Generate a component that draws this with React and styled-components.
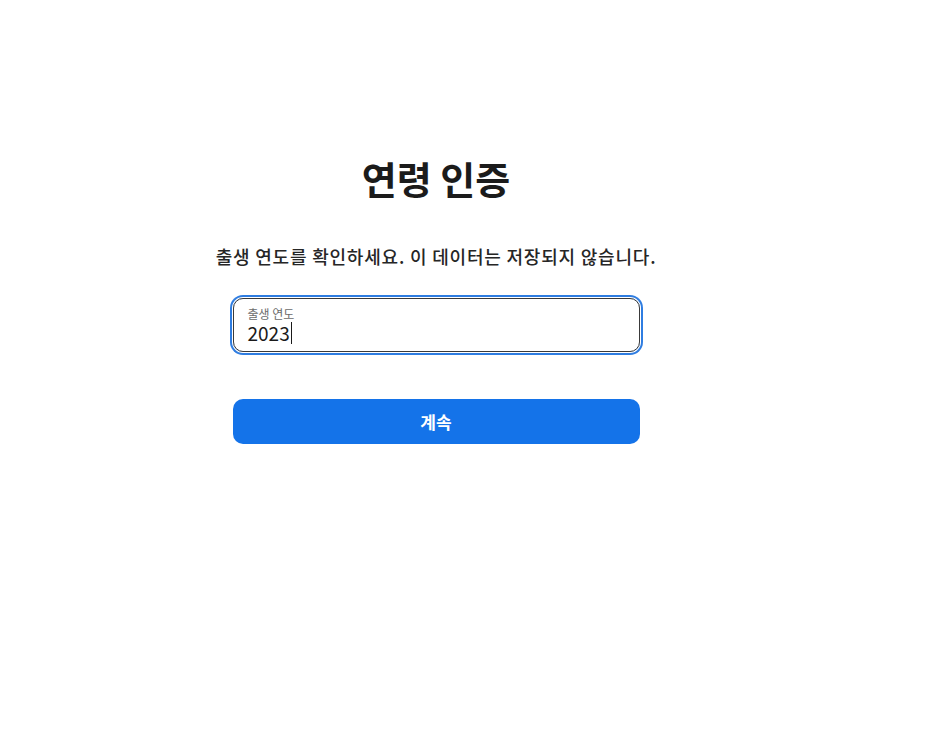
import styled, { createGlobalStyle } from "styled-components";

const GlobalStyle = createGlobalStyle`
  body {
    margin: 0;
    background: #ffffff;
    font-family: "Noto Sans CJK KR", "Noto Sans", sans-serif;
    color: #1f1f1f;
  }
`;

const Page = styled.main`
  width: 872px;
  display: flex;
  flex-direction: column;
  align-items: center;
  padding-top: 150px;
`;

const Title = styled.h1`
  margin: 0;
  font-size: 38px;
  font-weight: 700;
  line-height: 56px;
  color: #1b1b1b;
`;

const Subtitle = styled.p`
  margin: 38px 0 0;
  font-size: 18px;
  font-weight: 500;
  letter-spacing: 0.8px;
  line-height: 24px;
  color: #262626;
  white-space: nowrap;
`;

const Form = styled.form`
  width: 407px;
  display: flex;
  flex-direction: column;
  margin-top: 30px;
`;

const Field = styled.label`
  display: flex;
  flex-direction: column;
  height: 54px;
  box-sizing: border-box;
  padding: 8px 14px 0;
  border: 1px solid #3a3a3a;
  border-radius: 10px;
  box-shadow: 0 0 0 1px #ffffff, 0 0 0 3px #2f7de1;
`;

const FieldLabel = styled.span`
  font-size: 12px;
  line-height: 14px;
  color: #6b6b6b;
`;

const FieldValue = styled.span`
  display: flex;
  align-items: center;
  font-size: 19px;
  line-height: 24px;
  color: #1a1a1a;
`;

const Caret = styled.span`
  width: 1px;
  height: 22px;
  background: #1a1a1a;
  margin-left: 1px;
`;

const Button = styled.button`
  margin-top: 47px;
  height: 45px;
  border: none;
  border-radius: 10px;
  background: #1473e9;
  color: #ffffff;
  font-family: inherit;
  font-size: 17px;
  font-weight: 700;
  cursor: pointer;
`;

export default function App() {
  return (
    <>
      <GlobalStyle />
      <Page>
        <Title>연령 인증</Title>
        <Subtitle>출생 연도를 확인하세요. 이 데이터는 저장되지 않습니다.</Subtitle>
        <Form onSubmit={(e) => e.preventDefault()}>
          <Field>
            <FieldLabel>출생 연도</FieldLabel>
            <FieldValue>
              2023
              <Caret />
            </FieldValue>
          </Field>
          <Button type="submit">계속</Button>
        </Form>
      </Page>
    </>
  );
}
